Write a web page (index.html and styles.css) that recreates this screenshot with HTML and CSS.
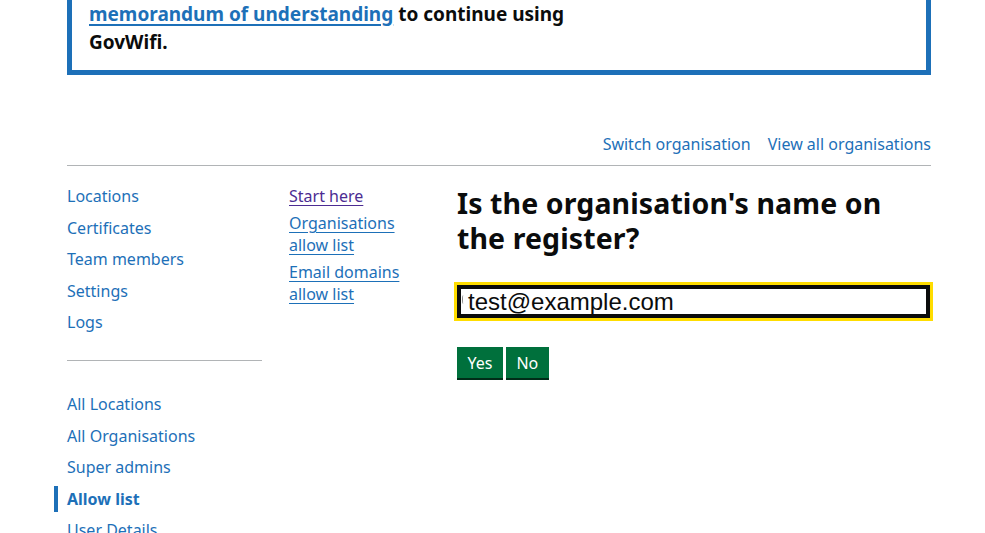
FILE: index.html
```html
<!DOCTYPE html>
<html lang="en">
<head>
<meta charset="utf-8">
<title>Allow list - GovWifi</title>
<link rel="stylesheet" href="styles.css">
</head>
<body>
<div class="page">
  <div class="banner">
    <p class="banner-text"><a href="#" class="banner-link">memorandum of understanding</a> to continue using<br>GovWifi.</p>
  </div>

  <div class="org-links">
    <a href="#" class="org-link">Switch organisation</a>
    <a href="#" class="org-link">View all organisations</a>
  </div>

  <div class="layout">
    <nav class="side-nav">
      <ul class="nav-list">
        <li><a href="#">Locations</a></li>
        <li><a href="#">Certificates</a></li>
        <li><a href="#">Team members</a></li>
        <li><a href="#">Settings</a></li>
        <li><a href="#">Logs</a></li>
      </ul>
      <hr class="nav-rule">
      <ul class="nav-list">
        <li><a href="#">All Locations</a></li>
        <li><a href="#">All Organisations</a></li>
        <li><a href="#">Super admins</a></li>
        <li class="active"><a href="#">Allow list</a></li>
        <li><a href="#">User Details</a></li>
      </ul>
    </nav>

    <nav class="sub-nav">
      <ul class="sub-list">
        <li><a href="#" class="visited">Start here</a></li>
        <li><a href="#">Organisations allow list</a></li>
        <li><a href="#">Email domains allow list</a></li>
      </ul>
    </nav>

    <main class="main">
      <h1 class="heading">Is the organisation's name on the register?</h1>
      <div class="input-wrap">
        <div class="input"><span class="prev"></span>test@example.com</div>
      </div>
      <div class="buttons">
        <button class="btn">Yes</button>
        <button class="btn">No</button>
      </div>
    </main>
  </div>
</div>
</body>
</html>
```

FILE: styles.css
```css
html, body {
  margin: 0;
  padding: 0;
  background: #ffffff;
  overflow: hidden;
}

body {
  font-family: "Noto Sans", Lato, sans-serif;
  color: #0b0c0c;
}

a {
  color: #1d70b8;
}

.page {
  width: 864px;
  margin-left: 67px;
}

.banner {
  margin-top: -20px;
  border: 5px solid #1d70b8;
  padding: 15px 17px 14px;
}

.banner-text {
  margin: 0;
  font-size: 19px;
  font-weight: 700;
  line-height: 28px;
}

.banner-link {
  text-decoration-thickness: 2px;
  text-underline-offset: 3px;
}

.org-links {
  margin-top: 59px;
  display: flex;
  justify-content: flex-end;
  gap: 17px;
  padding-bottom: 11px;
  border-bottom: 1px solid #b1b4b6;
}

.org-link {
  font-size: 16px;
  line-height: 20px;
  text-decoration: none;
}

.layout {
  display: flex;
  padding-top: 20px;
}

.side-nav {
  width: 195px;
  flex: none;
}

.nav-list {
  list-style: none;
  margin: 0;
  padding: 0;
}

.nav-list li {
  font-size: 16px;
  line-height: 20px;
  margin-bottom: 11.5px;
}

.nav-list a {
  text-decoration: none;
  display: inline-block;
}

.nav-list li.active a {
  font-weight: 700;
  border-left: 4px solid #1d70b8;
  margin-left: -13px;
  padding: 3px 0 3px 9px;
  margin-top: -3px;
  margin-bottom: -3px;
}

.nav-rule {
  border: 0;
  border-top: 1px solid #b1b4b6;
  margin: 28px 0 33px;
}

.sub-nav {
  width: 137px;
  flex: none;
  margin-left: 27px;
}

.sub-list {
  list-style: none;
  margin: -1px 0 0;
  padding: 0;
}

.sub-list li {
  font-size: 16px;
  line-height: 22px;
  margin-bottom: 5px;
}

.sub-list a {
  text-underline-offset: 3px;
}

.sub-list a.visited {
  color: #4c2c92;
}

.main {
  flex: 1;
  margin-left: 31px;
  min-width: 0;
}

.heading {
  margin: 0;
  max-width: 440px;
  font-size: 28.5px;
  line-height: 35px;
  font-weight: 700;
  letter-spacing: 0.1px;
}

.input-wrap {
  margin-top: 26px;
  border: 3px solid #ffdd00;
  margin-left: -3px;
  margin-right: -2px;
}

.input {
  border: 4px solid #0b0c0c;
  height: 25px;
  overflow: hidden;
  white-space: nowrap;
  font-family: "Liberation Sans", Arial, sans-serif;
  font-size: 24px;
  line-height: 25px;
  color: #0b0c0c;
  padding-left: 1px;
}

.prev {
  display: inline-block;
  width: 2px;
  height: 9px;
  margin-right: 3px;
  border-left: 1px solid #8a8a8a;
  border-radius: 50% 0 0 50%;
  vertical-align: 6px;
}

.buttons {
  margin-top: 26px;
  display: flex;
  gap: 3px;
}

.btn {
  font-family: "Noto Sans", Lato, sans-serif;
  font-size: 16px;
  line-height: 20px;
  color: #ffffff;
  background: #00703c;
  border: 0;
  border-radius: 0;
  padding: 6px 10.5px 5px;
  box-shadow: 0 2px 0 #002d18;
  cursor: pointer;
}
```
